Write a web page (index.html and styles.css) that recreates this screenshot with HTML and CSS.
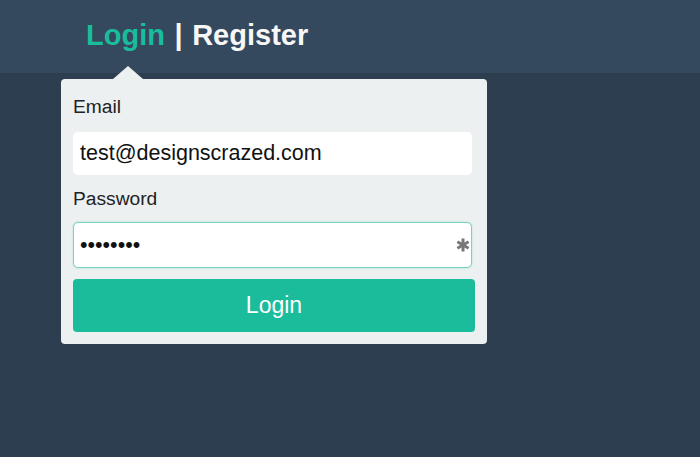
FILE: index.html
```html
<!DOCTYPE html>
<html lang="en">
<head>
    <meta charset="UTF-8">
    <meta name="viewport" content="width=device-width, initial-scale=1.0">
    <title>Login</title>
    <link rel="stylesheet" href="styles.css">
</head>
<body>
    <div class="topbar">
        <a class="tab active" href="#">Login</a> <span class="sep">|</span> <a class="tab" href="#">Register</a>
    </div>

    <!-- Caixa de login -->
    <form class="login-box" onsubmit="return false">
        <label class="field-label" for="email">Email</label>
        <input class="field" type="text" id="email" value="test@designscrazed.com">

        <label class="field-label pass-label" for="password">Password</label>
        <div class="pass-wrap">
            <input class="field pass" type="password" id="password" value="12345678">
            <svg class="req" width="14" height="14" viewBox="0 0 14 14">
                <g stroke="#777" stroke-width="3" stroke-linecap="butt">
                    <line x1="7" y1="0.5" x2="7" y2="13.5"/>
                    <line x1="1.4" y1="3.75" x2="12.6" y2="10.25"/>
                    <line x1="1.4" y1="10.25" x2="12.6" y2="3.75"/>
                </g>
            </svg>
        </div>

        <button class="login-btn" type="submit">Login</button>
    </form>
</body>
</html>
```

FILE: styles.css
```css
body {
    margin: 0;
    padding: 0;
    background-color: #2c3e50;
    font-family: 'Liberation Sans', Arial, sans-serif;
    min-height: 100vh;
}

.topbar {
    height: 73px;
    line-height: 70px;
    padding-left: 86px;
    background-color: #34495e;
    font-size: 29px;
    font-weight: bold;
    color: #f7f7f7;
    word-spacing: 1.5px;
}

.tab {
    color: #f7f7f7;
    text-decoration: none;
}

.tab.active {
    color: #1abc9c;
}

.sep {
    color: #f7f7f7;
}

.login-box {
    position: relative;
    width: 402px;
    margin: 6px 0 0 61px;
    padding: 17px 12px 12px 12px;
    background-color: #ecf0f1;
    border-radius: 4px;
    display: flex;
    flex-direction: column;
}

/* setinha apontando para a aba */
.login-box::before {
    content: '';
    position: absolute;
    top: -13px;
    left: 52px;
    border-left: 15px solid transparent;
    border-right: 15px solid transparent;
    border-bottom: 13px solid #ecf0f1;
}

.field-label {
    font-size: 19.2px;
    line-height: 22px;
    color: #222;
    margin-bottom: 14px;
}

.pass-label {
    margin-top: 13px;
    margin-bottom: 12px;
}

.field {
    box-sizing: border-box;
    width: 399px;
    height: 43px;
    padding: 0 7px;
    border: none;
    border-radius: 5px;
    background-color: #fff;
    font-family: 'Liberation Sans', Arial, sans-serif;
    font-size: 21.5px;
    color: #111;
    outline: none;
}

.pass-wrap {
    position: relative;
}

.field.pass {
    height: 46px;
    border: 1px solid #7ad3c0;
    padding-left: 6px;
    box-shadow: 0 0 2px rgba(26, 188, 156, 0.35);
}

.req {
    position: absolute;
    right: 5px;
    top: 16px;
}

.login-btn {
    margin-top: 11px;
    width: 402px;
    height: 53px;
    border: none;
    border-radius: 4px;
    background-color: #1abc9c;
    color: #fff;
    font-family: 'Liberation Sans', Arial, sans-serif;
    font-size: 23px;
    cursor: pointer;
}
```
